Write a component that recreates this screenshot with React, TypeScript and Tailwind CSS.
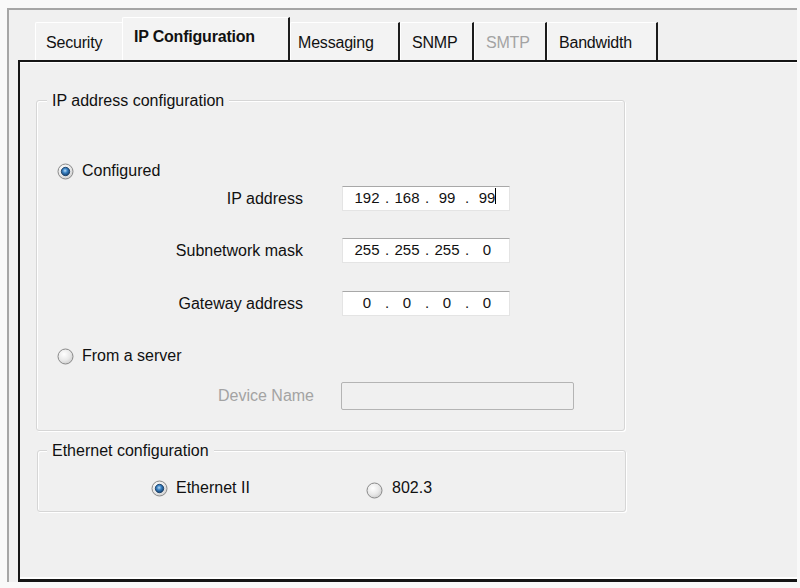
import { useId } from 'react';

const tabs = [
  { label: 'Security', w: 'w-[87px]', pl: 'pl-[10px]', active: false, disabled: false, first: true },
  { label: 'IP Configuration', w: 'w-[168px]', pl: 'pl-[11px]', active: true, disabled: false, first: false },
  { label: 'Messaging', w: 'w-[110px]', pl: 'pl-[7px]', active: false, disabled: false, first: false },
  { label: 'SNMP', w: 'w-[74px]', pl: 'pl-[11px]', active: false, disabled: false, first: false },
  { label: 'SMTP', w: 'w-[73px]', pl: 'pl-[11px]', active: false, disabled: true, first: false },
  { label: 'Bandwidth', w: 'w-[111px]', pl: 'pl-[11px]', active: false, disabled: false, first: false },
];

function Radio({ checked }: { checked?: boolean }) {
  const id = useId().replace(/:/g, '');
  return (
    <svg width="17" height="17" viewBox="0 0 17 17" className="shrink-0">
      <defs>
        <radialGradient id={`bg${id}`} cx="0.4" cy="0.35" r="0.75">
          <stop offset="0" stopColor="#ffffff" />
          <stop offset="0.55" stopColor="#e9e9e9" />
          <stop offset="1" stopColor="#c6c6c6" />
        </radialGradient>
        <radialGradient id={`dot${id}`} cx="0.45" cy="0.4" r="0.6">
          <stop offset="0" stopColor="#b8dcf8" />
          <stop offset="0.45" stopColor="#3a82c4" />
          <stop offset="1" stopColor="#123f6e" />
        </radialGradient>
      </defs>
      <circle cx="8.5" cy="8.5" r="7.5" fill={`url(#bg${id})`} stroke="#8a8a8a" strokeWidth="1" />
      {checked && <circle cx="8.5" cy="8.5" r="4.2" fill={`url(#dot${id})`} stroke="#1b3f66" strokeWidth="0.9" />}
    </svg>
  );
}

function IpField({ octets, caret }: { octets: string[]; caret?: boolean }) {
  return (
    <div className="w-[168px] h-[25px] bg-white border border-[#e4e4e4] border-t-[#a8a8a8] flex items-center pl-[9px] text-[15px] text-[#111]">
      {octets.map((o, i) => (
        <div key={i} className="flex items-center">
          <span className="w-[30px] text-center relative">
            {o}
            {caret && i === 3 && <span className="absolute right-[6px] top-[1px] w-px h-[16px] bg-black" />}
          </span>
          {i < 3 && <span className="w-[10px] text-center">.</span>}
        </div>
      ))}
    </div>
  );
}

function FieldRow({ label, octets, caret, mt }: { label: string; octets: string[]; caret?: boolean; mt: string }) {
  return (
    <div className={`flex items-center ${mt}`}>
      <span className="w-[266px] text-right text-[16px]">{label}</span>
      <div className="ml-[39px]">
        <IpField octets={octets} caret={caret} />
      </div>
    </div>
  );
}

export default function App() {
  return (
    <div className="w-[800px] h-[588px] bg-[#f9f9f9] pt-[8px] pl-[7px] overflow-hidden font-['Liberation_Sans',Arial,sans-serif] text-[#111]">
      <div className="w-[790px] h-[574px] border-l-2 border-t-2 border-[#a6a6a6] bg-[#f0f0f0] pl-[9px] flex flex-col">
        {/* tab strip */}
        <div className="h-[50px] flex items-end pl-[17px]">
          {tabs.map(t => (
            <div
              key={t.label}
              className={`${t.w} ${t.pl} ${t.active ? 'h-[43px] font-bold pb-[4px]' : 'h-[38px] pt-[2px]'} ${t.first ? '' : 'border-r-2 border-r-[#1c1c1c]'} ${t.disabled ? 'text-[#a3a3a3]' : ''} border-t border-l border-t-white border-l-white bg-[#f3f3f3] rounded-tl-[2px] flex items-center text-[16px] tracking-[-0.2px]`}
            >
              {t.label}
            </div>
          ))}
        </div>

        {/* panel */}
        <div className="flex-1 border-l-2 border-t-2 border-b-[3px] border-[#151515] shadow-[inset_0_1px_0_#fff,inset_0_-2px_0_#fff] pl-[16px]">
          {/* IP address configuration */}
          <div className="mt-[38px] w-[589px] h-[331px] border border-[#d6d6d6] rounded-[3px] shadow-[inset_1px_1px_0_#fff,1px_1px_0_#fff] flex flex-col">
            <span className="-mt-[10px] ml-[10px] px-[5px] w-fit h-[20px] leading-[20px] bg-[#f0f0f0] text-[16px]">IP address configuration</span>

            <div className="mt-[50px] pl-[20px] h-[20px] flex items-center gap-[8px] text-[16px]">
              <Radio checked />
              <span>Configured</span>
            </div>

            <FieldRow label="IP address" octets={['192', '168', '99', '99']} caret mt="mt-[5px]" />
            <FieldRow label="Subnetwork mask" octets={['255', '255', '255', '0']} mt="mt-[27px]" />
            <FieldRow label="Gateway address" octets={['0', '0', '0', '0']} mt="mt-[28px]" />

            <div className="mt-[30px] pl-[20px] h-[20px] flex items-center gap-[8px] text-[16px]">
              <Radio />
              <span>From a server</span>
            </div>

            <div className="mt-[16px] flex items-center">
              <span className="w-[277px] text-right text-[16px] text-[#a3a3a3]">Device Name</span>
              <div className="ml-[27px] w-[233px] h-[28px] border border-[#b4b4b4] rounded-[2px] bg-[#f0f0f0]" />
            </div>
          </div>

          {/* Ethernet configuration */}
          <div className="mt-[19px] ml-[1px] w-[589px] h-[62px] border border-[#d6d6d6] rounded-[3px] shadow-[inset_1px_1px_0_#fff,1px_1px_0_#fff] flex flex-col">
            <span className="-mt-[10px] ml-[9px] px-[5px] w-fit h-[20px] leading-[20px] bg-[#f0f0f0] text-[16px]">Ethernet configuration</span>
            <div className="mt-[17px] flex items-center h-[20px] text-[16px]">
              <div className="ml-[113px] w-[215px] flex items-center gap-[8px]">
                <Radio checked />
                <span>Ethernet II</span>
              </div>
              <div className="flex items-center gap-[9px]">
                <span className="mt-[4px] flex"><Radio /></span>
                <span>802.3</span>
              </div>
            </div>
          </div>
        </div>
      </div>
    </div>
  );
}
